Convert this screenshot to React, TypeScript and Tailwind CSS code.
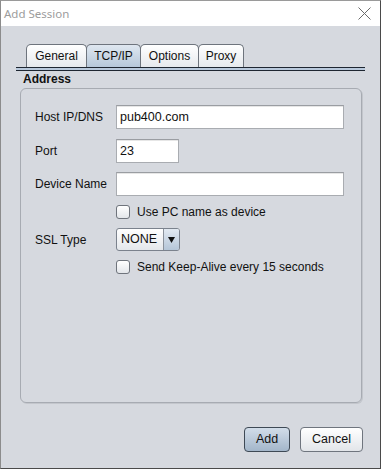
import React from 'react';

const font = { fontFamily: '"Liberation Sans", Arial, sans-serif' };

const tabs = [
  { label: 'General', w: 'w-[61px]' },
  { label: 'TCP/IP', w: 'w-[55px]' },
  { label: 'Options', w: 'w-[59px]' },
  { label: 'Proxy', w: 'w-[46px]' },
];

const Checkbox: React.FC<{ label: string }> = ({ label }) => (
  <label className="flex items-center h-[14px]">
    <span className="w-[14px] h-[14px] rounded-[3px] border border-[#6f747c] bg-gradient-to-b from-white to-[#e3e6ea]" />
    <span className="ml-[7px] text-[12px] leading-[14px] text-[#111]">{label}</span>
  </label>
);

const TextField: React.FC<{ value?: string; w: string; h?: string }> = ({ value, w, h = 'h-[24px]' }) => (
  <div
    className={`${w} ${h} bg-white border border-[#a9acb1] border-t-[#9a9da2] shadow-[inset_0_1px_0_#e6e6e6] flex items-center pl-[3px] text-[12.5px] text-[#111]`}
  >
    {value}
  </div>
);

export default function App() {
  return (
    <div className="w-[381px] h-[469px] flex flex-col border border-[#4a4a4a] border-t-[#9a9a9a] border-l-[#8c8c8c] bg-[#d6d9df]" style={font}>
      {/* title bar */}
      <div className="h-[25px] bg-white flex items-center justify-between pl-[3px] pr-[9px]">
        <span className="text-[11.5px] text-[#9c9c9c]" style={{ fontFamily: '"Noto Sans", "Open Sans", sans-serif' }}>
          Add Session
        </span>
        <svg width="13" height="13" viewBox="0 0 13 13">
          <path d="M0.5 0.5 L12.5 12.5 M12.5 0.5 L0.5 12.5" stroke="#6a6a6a" strokeWidth="1" fill="none" />
        </svg>
      </div>

      <div className="flex-1 flex flex-col">
        {/* tab strip */}
        <div className="ml-[15px] w-[349px] mt-[18px]">
          <div className="flex pl-[10px] h-[23px]">
            {tabs.map((t, i) => (
              <div
                key={t.label}
                className={`${t.w} ${i > 0 ? '-ml-px' : ''} h-full flex items-center justify-center rounded-t-[5px] border border-b-0 border-[#6e747d] text-[12px] text-[#111] ${
                  i === 1
                    ? 'bg-gradient-to-b from-[#dfe7f0] to-[#b7c8da]'
                    : 'bg-gradient-to-b from-white to-[#e6e9ed]'
                }`}
              >
                {t.label}
              </div>
            ))}
          </div>
          <div className="h-px bg-[#1e2631]" />
          <div className="h-[2px] bg-[#b9c9dc]" />
          <div className="h-px bg-[#1e2631]" />
        </div>

        <div className="ml-[22px] mt-[1px] text-[12px] leading-[14px] font-bold text-[#111]">Address</div>

        {/* address panel */}
        <div className="ml-[19px] mt-[2px] w-[342px] h-[315px] rounded-[6px] border border-[#a7abb2] shadow-[1px_1px_0_#c3c6cc] pl-[14px] flex flex-col">
          <div className="mt-[16px] flex items-center">
            <span className="w-[81px] text-[12px] text-[#111]">Host IP/DNS</span>
            <TextField value="pub400.com" w="w-[228px]" />
          </div>
          <div className="mt-[10px] flex items-center">
            <span className="w-[81px] text-[12px] text-[#111]">Port</span>
            <TextField value="23" w="w-[63px]" />
          </div>
          <div className="mt-[9px] flex items-center">
            <span className="w-[81px] text-[12px] text-[#111]">Device Name</span>
            <TextField w="w-[228px]" />
          </div>
          <div className="mt-[9px] ml-[81px]">
            <Checkbox label="Use PC name as device" />
          </div>
          <div className="mt-[9px] flex items-center">
            <span className="w-[81px] text-[12px] text-[#111]">SSL Type</span>
            <div className="w-[64px] h-[23px] rounded-[3px] border border-[#7b828d] bg-gradient-to-b from-white to-[#e4e7eb] flex overflow-hidden">
              <span className="flex-1 flex items-center pl-[4px] text-[12.5px] text-[#111]">NONE</span>
              <span className="w-[16px] border-l border-[#8a919b] bg-gradient-to-b from-[#e2e9f1] to-[#b5c6d8] flex items-center justify-center">
                <svg width="7" height="6" viewBox="0 0 7 6">
                  <path d="M0 0 H7 L3.5 6 Z" fill="#111" />
                </svg>
              </span>
            </div>
          </div>
          <div className="mt-[9px] ml-[81px]">
            <Checkbox label="Send Keep-Alive every 15 seconds" />
          </div>
        </div>

        {/* buttons */}
        <div className="mt-[24px] flex justify-end pr-[17px] gap-[10px]">
          <button className="w-[46px] h-[25px] rounded-[4px] border border-[#3e4955] bg-gradient-to-b from-[#d2dde9] to-[#a3b6ca] text-[12.5px] text-[#111]">
            Add
          </button>
          <button className="w-[63px] h-[25px] rounded-[4px] border border-[#6f757e] bg-gradient-to-b from-white to-[#e2e5e9] text-[12.5px] text-[#111]">
            Cancel
          </button>
        </div>
      </div>
    </div>
  );
}
